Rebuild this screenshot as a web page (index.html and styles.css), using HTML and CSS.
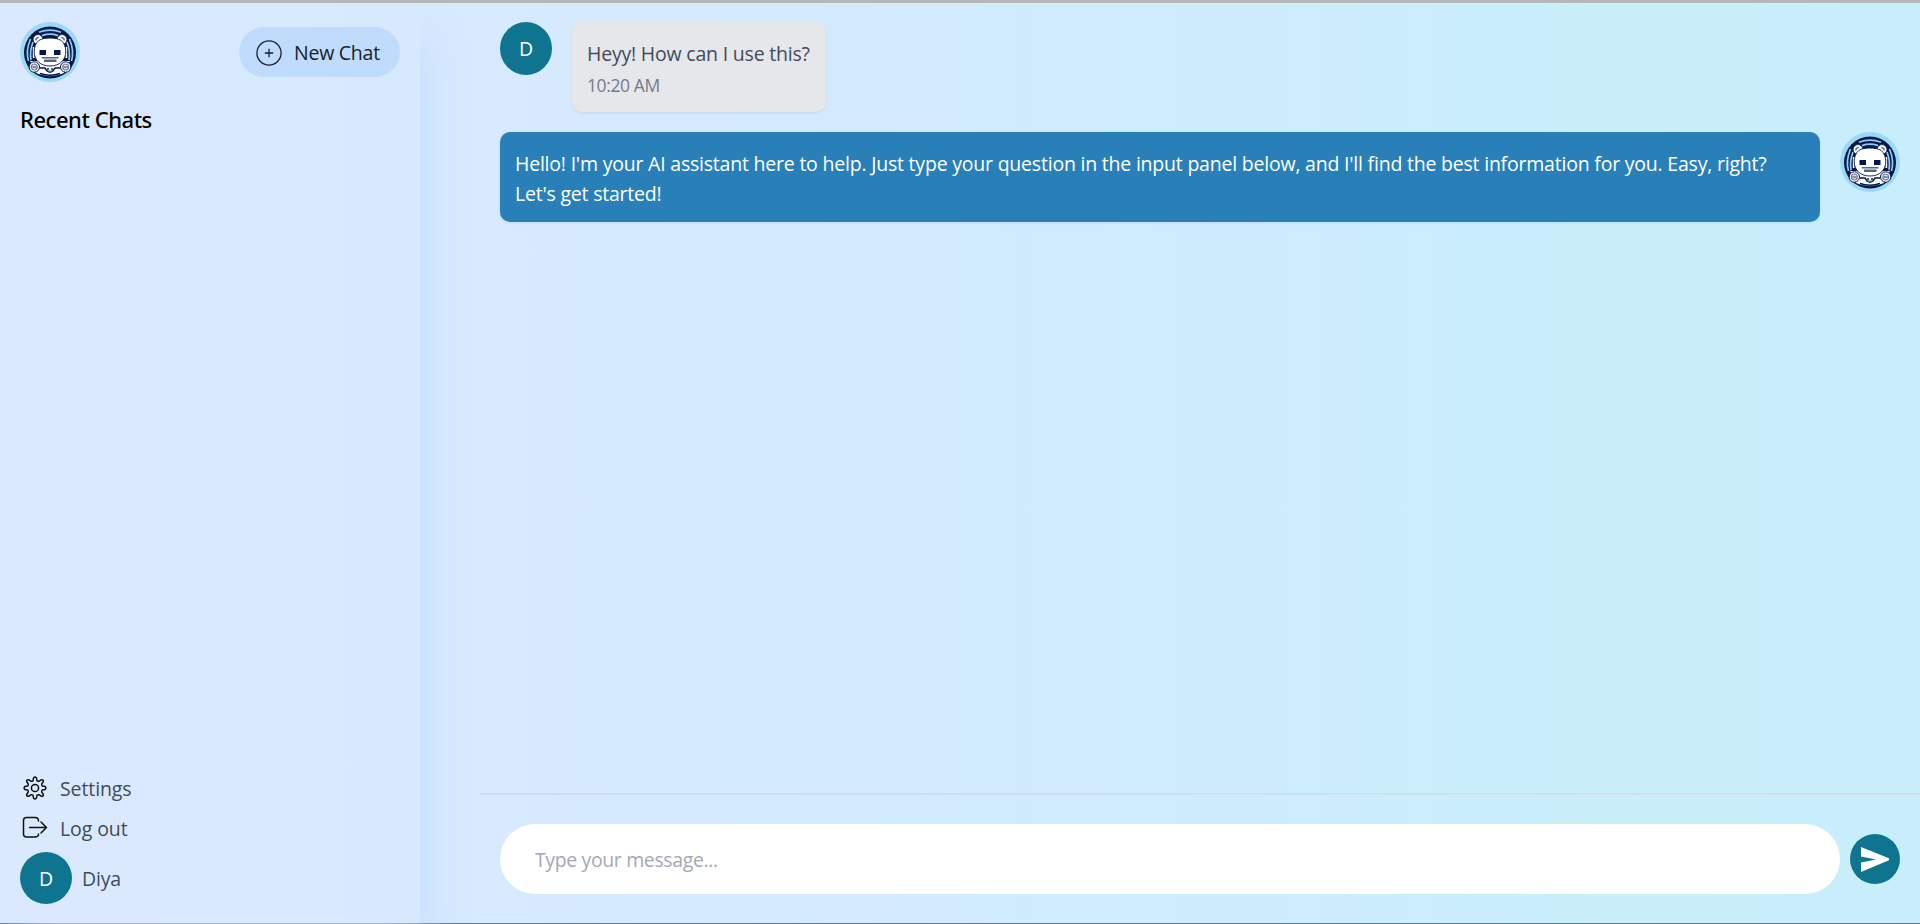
FILE: index.html
```
<!DOCTYPE html>
<html lang="en">
<head>
<meta charset="utf-8">
<title>AI Chat</title>
<link rel="stylesheet" href="styles.css">
</head>
<body>
<svg class="defs" width="0" height="0" aria-hidden="true">
  <symbol id="bot" viewBox="0 0 60 60">
    <circle cx="30" cy="30" r="30" fill="#9bd9f7"/>
    <circle cx="30" cy="30.600" r="26" fill="#04174a"/>
    <g fill="none" stroke="#8fcdf0" stroke-width="1.700">
      <path d="M19 10.200q11-4 22 0M22 13.600q8-2.800 16 0"/>
      <path d="M10.500 17Q5.500 29 8.500 39M13 20Q9.500 29 11 38M49.500 17Q54.500 29 51.500 39M47 20Q50.500 29 49 38"/>
    </g>
    <path d="M10 39h40l-6 12q-14 6.500-28 0z" fill="#fff"/>
    <g fill="#fff" stroke="#04174a" stroke-width=".8">
      <circle cx="18" cy="17.500" r="4.900"/><circle cx="42" cy="17.500" r="4.900"/>
    </g>
    <path d="M15.800 18.500q0-3 3-3M44.200 18.500q0-3-3-3" fill="none" stroke="#68769c" stroke-width="1.500"/>
    <path d="M13.700 25v11M46.300 25v11" stroke="#fff" stroke-width="1.800"/>
    <path d="M30 16c4.500 0 8 .7 11 2.300 3.300 2.700 4.800 6.700 4.800 11.200 0 8.500-6 14.500-15.800 14.500s-15.800-6-15.800-14.500c0-4.500 1.500-8.500 4.800-11.200 3-1.600 6.500-2.300 11-2.300z" fill="#fff" stroke="#04174a" stroke-width=".9"/>
    <path d="M19.500 28h6.500v5h-6.500zM34 28h6.500v5H34z" fill="#04174a"/>
    <path d="M21.700 35h16.800v1.600H21.700zM24 37.600h12.500v2.400H24z" fill="#586680"/>
    <path d="M20 46h5l2 3 3 1.500 3-1.500 2-3h5M28 46v2M32 46v2M20 51.500q10 3.500 20 0" fill="none" stroke="#04174a" stroke-width="1.400"/>
    <path d="M27.500 48.500h5L30 51z" fill="#3f83b7"/>
    <g fill="#fff" stroke="#04174a" stroke-width="1"><circle cx="14.300" cy="45" r="5.200"/><circle cx="45.700" cy="45" r="5.200"/></g>
    <g fill="#d7dce8" stroke="#737d9b" stroke-width="1.200"><circle cx="14.300" cy="45" r="3"/><circle cx="45.700" cy="45" r="3"/></g>
    <path d="M12.300 45h4M43.700 45h4" stroke="#37446d"/>
  </symbol>
</svg>
<div class="app">
  <aside class="sidebar">
    <header class="side-head">
      <svg class="bot"><use href="#bot"/></svg>
      <button class="new-chat">
        <svg class="plus" viewBox="0 0 26 26"><circle cx="13" cy="13" r="12.100"/><path d="M13 8.800v8.400M8.800 13h8.400"/></svg>
        <span>New Chat</span>
      </button>
    </header>
    <h2 class="recent">Recent Chats</h2>
    <nav class="menu">
      <a class="item"><svg class="ico" viewBox="0 0 30 30"><circle cx="15" cy="15" r="3.600"/><path d="M12.90 7.80 L13.60 4.800Q15 3.400 16.400 4.800L17.100 7.800Q18 8.500 18.900 8.300L21.500 6.700Q23.500 6.500 23.300 8.500L21.700 11.100Q21.500 12 22.200 12.900L25.200 13.600Q26.600 15 25.200 16.400L22.200 17.100Q21.500 18 21.700 18.900L23.300 21.500Q23.500 23.500 21.500 23.300L18.900 21.700Q18 21.500 17.100 22.200L16.400 25.200Q15 26.600 13.600 25.200L12.900 22.200Q12 21.500 11.100 21.700L8.500 23.300Q6.500 23.500 6.700 21.500L8.300 18.900Q8.500 18 7.800 17.100L4.800 16.400Q3.400 15 4.800 13.600L7.800 12.900Q8.500 12 8.300 11.100L6.700 8.500Q6.500 6.500 8.500 6.700L11.100 8.300Q12 8.500 12.900 7.800Z"/></svg><span>Settings</span></a>
      <a class="item"><svg class="ico" viewBox="0 0 30 30"><path d="M18.500 8q0-3.500-3.500-3.500H6.500Q3.500 4.500 3.500 7.500v13.500q0 3 3 3h8.500q3.500 0 3.500-3M9.500 14.500h17M21 9l5.500 5.500-5.500 5.500"/></svg><span>Log out</span></a>
    </nav>
    <div class="user"><span class="avatar small">D</span><span class="name">Diya</span></div>
  </aside>
  <main class="chat">
    <section class="messages">
      <div class="row">
        <span class="avatar">D</span>
        <div class="bubble ask"><p>Heyy! How can I use this?</p><p class="time">10:20 AM</p></div>
      </div>
      <div class="row">
        <div class="bubble reply"><p>Hello! I'm your AI assistant here to help. Just type your question in the input panel below, and I'll find the best information for you. Easy, right?<br>Let's get started!</p></div>
        <svg class="bot"><use href="#bot"/></svg>
      </div>
    </section>
    <form class="composer">
      <input class="field" type="text" placeholder="Type your message...">
      <button class="send" type="button" aria-label="Send"><svg viewBox="0 0 50 50"><path d="M11 13l28 11.300v2L11 38v-9.500L26 25.500 11 22.500z"/></svg></button>
    </form>
  </main>
</div>
</body>
</html>
```
FILE: styles.css
```
* { box-sizing: border-box; }
body {
  margin: 0;
  height: 924px;
  overflow: hidden;
  font: 19.5px/30px "Open Sans", "Noto Sans", sans-serif;
  letter-spacing: -.205px;
  color: #414b5b;
  background: linear-gradient(90deg, #dbe9fe 0%, #d5eafe 37%, #ceecfe 66%, #c8effa 85%, #c8eefc 100%);
}
p, h2 { margin: 0; }
button { border: 0; padding: 0; font: inherit; }
.defs { display: block; }
.app {
  display: flex;
  height: 924px;
  border-top: 3px solid #b5b7b8;
  border-bottom: 1px solid #64798b;
}
.sidebar {
  width: 420px;
  margin-right: 60px;
  padding: 20px 20px 19px;
  display: flex;
  flex-direction: column;
  box-shadow: 12px 30px 38px -8px rgba(191, 215, 254, .7);
  background: linear-gradient(90deg, #dbe9fe, #d8e9fe);
}
.side-head { display: flex; justify-content: space-between; align-items: center; height: 60px; margin-top: -1px; }
.bot { width: 60px; height: 60px; flex: none; display: block; }
.new-chat {
  width: 161px;
  height: 50px;
  border-radius: 25px;
  background: #bfdbfe;
  color: #1a202c;
  display: flex;
  align-items: center;
  padding: 1px 0 0 17px;
  gap: 12px;
  white-space: nowrap;
  letter-spacing: -.25px;
}
.plus { width: 26px; height: 26px; fill: none; stroke: #1a202c; stroke-width: 1.3; }
.recent { margin-top: 21px; font-family: "Noto Sans", sans-serif; font-size: 22px; line-height: 32px; font-weight: 500; color: #000; letter-spacing: -.46px; }
.menu { margin-top: auto; display: flex; flex-direction: column; gap: 10px; letter-spacing: -.1px; }
.item { display: flex; align-items: center; gap: 10px; height: 30px; }
.item span, .name { padding-top: 1px; }
.ico { width: 30px; height: 30px; fill: none; stroke: #111; stroke-width: 1.5; stroke-linejoin: round; stroke-linecap: round; }
.user { display: flex; align-items: center; gap: 10px; margin-top: 9px; }
.avatar {
  width: 52px;
  height: 53px;
  flex: none;
  border-radius: 50%;
  background: #0e7490;
  color: #fff;
  font-weight: 500;
  display: flex;
  align-items: center;
  justify-content: center;
}
.small { height: 52px; padding-top: 1px; }
.chat { flex: 1; display: flex; flex-direction: column; min-width: 0; }
.messages { flex: 1; padding: 19px 20px; display: flex; flex-direction: column; gap: 20px; }
.row { display: flex; gap: 20px; align-items: flex-start; }
.bubble { height: 90px; padding: 17px 15px 13px; border-radius: 10px; box-shadow: 0 1px 3px rgba(0, 0, 0, .08); white-space: nowrap; }
.ask { width: 254px; background: #e5e7eb; }
.time { font-size: 17.5px; line-height: 33px; color: #747b88; letter-spacing: -.4px; }
.reply { width: 1320px; background: #2980b9; color: #fff; letter-spacing: -.212px; }
.composer {
  height: 130px;
  border-top: 2px solid #d0dfe9;
  padding: 0 20px;
  display: flex;
  align-items: center;
  gap: 10px;
}
.field {
  width: 1340px;
  height: 70px;
  border: 0;
  border-radius: 35px;
  background: #fff;
  padding: 1px 35px 0;
  font: inherit;
  letter-spacing: -.38px;
}
.field::placeholder { color: #a3a9b4; opacity: 1; }
.send { width: 50px; height: 50px; border-radius: 50%; background: #0e7490; }
.send svg { display: block; width: 50px; height: 50px; fill: #fff; }
```
